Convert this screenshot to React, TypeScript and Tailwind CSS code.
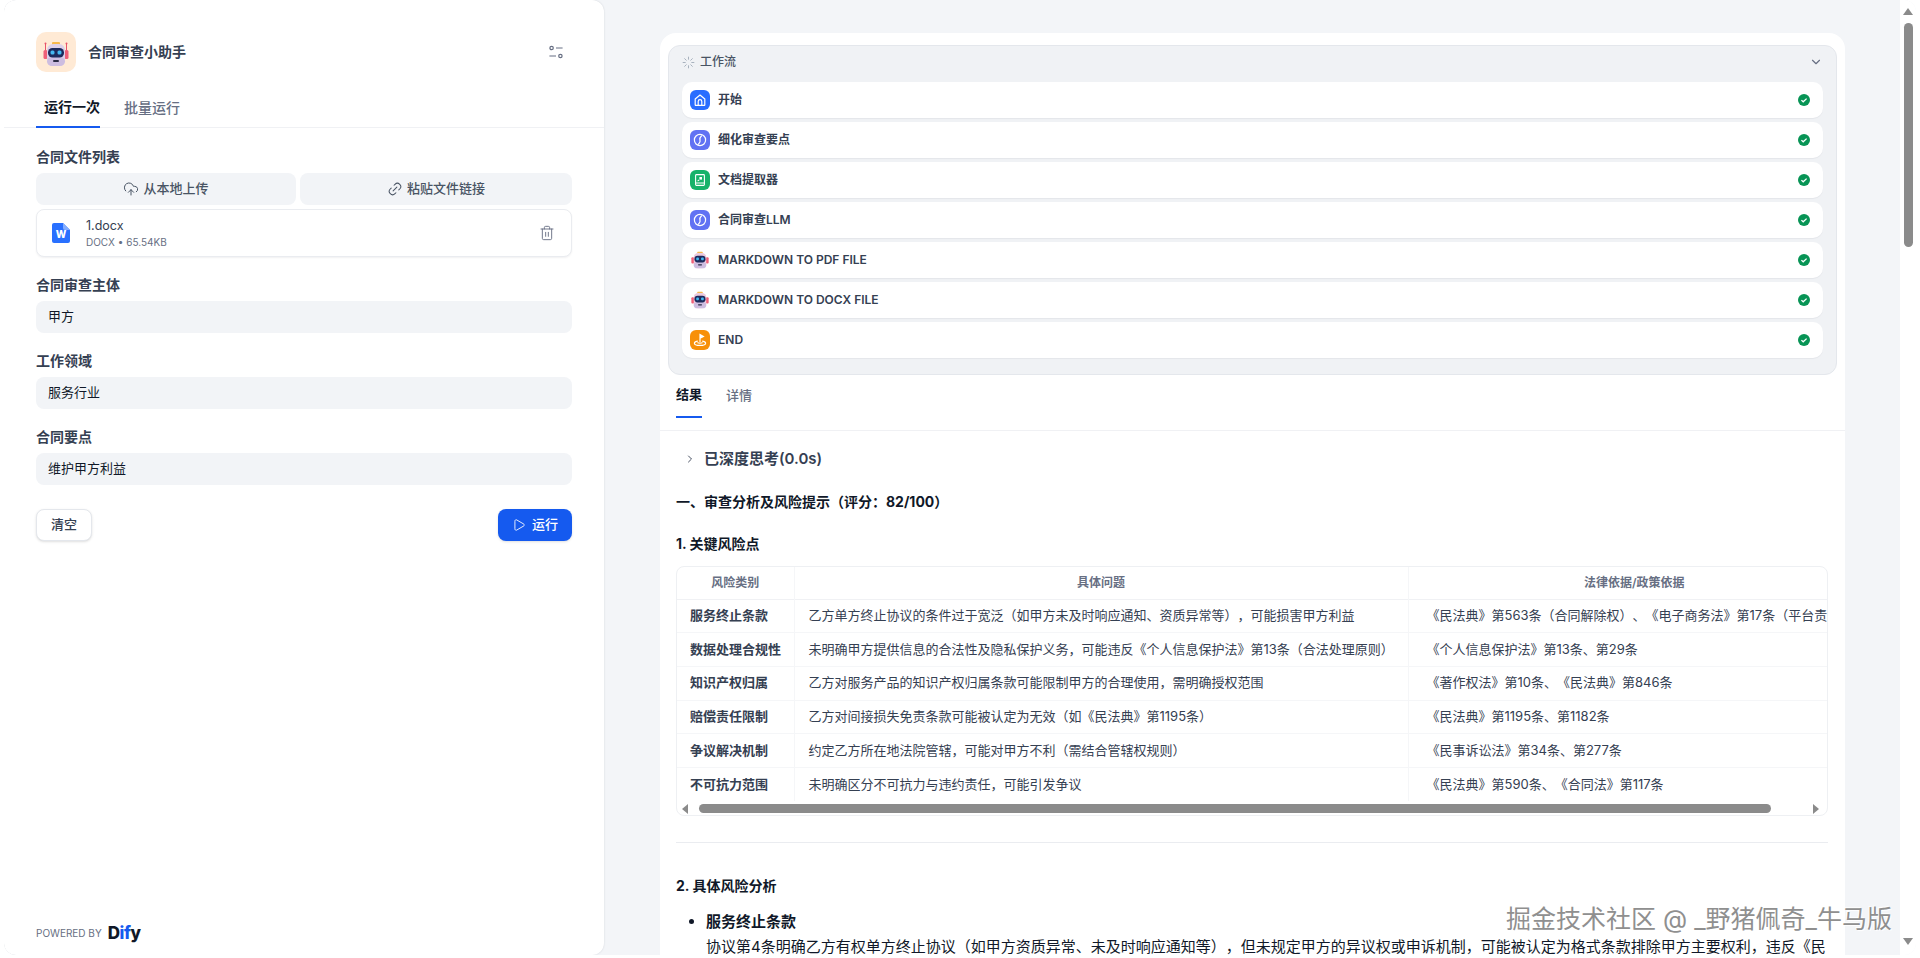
import { ChevronDown, ChevronRight, CloudUpload, Link2, Loader, Play, Trash2 } from "lucide-react";

const font = "font-['Inter','Noto_Sans_CJK_SC',sans-serif]";

const rows = [
  ["服务终止条款", "乙方单方终止协议的条件过于宽泛（如甲方未及时响应通知、资质异常等），可能损害甲方利益", "《民法典》第563条（合同解除权）、《电子商务法》第17条（平台责任）"],
  ["数据处理合规性", "未明确甲方提供信息的合法性及隐私保护义务，可能违反《个人信息保护法》第13条（合法处理原则）", "《个人信息保护法》第13条、第29条"],
  ["知识产权归属", "乙方对服务产品的知识产权归属条款可能限制甲方的合理使用，需明确授权范围", "《著作权法》第10条、《民法典》第846条"],
  ["赔偿责任限制", "乙方对间接损失免责条款可能被认定为无效（如《民法典》第1195条）", "《民法典》第1195条、第1182条"],
  ["争议解决机制", "约定乙方所在地法院管辖，可能对甲方不利（需结合管辖权规则）", "《民事诉讼法》第34条、第277条"],
  ["不可抗力范围", "未明确区分不可抗力与违约责任，可能引发争议", "《民法典》第590条、《合同法》第117条"],
];

function Robot({ className, small }: { className: string; small?: boolean }) {
  return (
    <svg className={className} viewBox={small ? "7 9 26 26" : "0 0 40 40"} fill="none">
      {!small && (
        <>
          <path d="M9.5 12v7M30.5 12v7" stroke="#e8536b" strokeWidth="1" />
          <circle cx="9.5" cy="11.5" r="1" fill="#e8536b" />
          <circle cx="30.5" cy="11.5" r="1" fill="#e8536b" />
        </>
      )}
      <rect x="7.5" y="18" width="4" height="9" rx="1.5" fill="#ef5f78" />
      <rect x="28.5" y="18" width="4" height="9" rx="1.5" fill="#ef5f78" />
      <rect x="16" y="10" width="8" height="3" rx="1" fill="#f7b84b" />
      <rect x="11" y="12" width="18" height="22" rx="6" fill={small ? "#ecc9dc" : "#ddd0ea"} />
      <rect x="11" y="25" width="18" height="9" rx="5" fill="#cdbde0" />
      <rect x="12" y="16" width="16" height="9.5" rx="4.5" fill="#1d2a5c" />
      <rect x="14.5" y="18.5" width="4" height="4" rx="1.5" fill="#45b8f0" />
      <rect x="21.5" y="18.5" width="4" height="4" rx="1.5" fill="#45b8f0" />
      <rect x="17" y="28" width="6" height="2" rx="1" fill="#2b2b45" />
    </svg>
  );
}

function NodeIcon({ kind }: { kind: string }) {
  if (kind === "robot") {
    return (
      <div className="flex h-5 w-5 items-center justify-center">
        <Robot className="h-[18px] w-[18px]" small />
      </div>
    );
  }
  const bg =
    kind === "home" ? "bg-[#296dff]" : kind === "llm" ? "bg-[#6172f3]" : kind === "doc" ? "bg-[#17b26a]" : "bg-[#f79009]";
  return (
    <div className={`flex h-5 w-5 items-center justify-center rounded-md ${bg}`}>
      {kind === "home" && (
        <svg className="h-3.5 w-3.5" viewBox="0 0 14 14" fill="none" stroke="white" strokeWidth="1.2" strokeLinejoin="round">
          <path d="M2.2 6 7 2l4.8 4v5.8a.6.6 0 0 1-.6.6H2.8a.6.6 0 0 1-.6-.6V6Z" />
          <path d="M5.2 12.2V8.4a1.8 1.8 0 0 1 3.6 0v3.8" />
        </svg>
      )}
      {kind === "llm" && (
        <svg className="h-3.5 w-3.5" viewBox="0 0 14 14" fill="none">
          <circle cx="7" cy="7" r="5.6" stroke="white" strokeWidth="1.2" />
          <path d="M8.4 3C6.8 4.4 6.6 5.6 7 7s.2 2.6-1.4 4" stroke="white" strokeWidth="1.3" strokeLinecap="round" />
        </svg>
      )}
      {kind === "doc" && (
        <svg className="h-3.5 w-3.5" viewBox="0 0 14 14" fill="none" stroke="white" strokeWidth="1.1">
          <rect x="2.6" y="1.6" width="8.8" height="10.8" rx="0.8" />
          <path d="M2.6 10h8.8" />
          <rect x="6.4" y="4" width="2.6" height="2.6" fill="white" stroke="none" />
          <path d="M4.6 8.2 6.2 6.8" />
        </svg>
      )}
      {kind === "end" && (
        <svg className="h-3.5 w-3.5" viewBox="0 0 14 14" fill="none" stroke="white" strokeWidth="1.2" strokeLinecap="round">
          <path d="M7 8.4V1.6l3.4 1.8L7 5.2" fill="white" />
          <path d="M4.4 8.2c-1.8.4-3 1.1-3 2 0 1.2 2.5 2.2 5.6 2.2s5.6-1 5.6-2.2c0-.9-1.2-1.6-3-2" />
          <path d="M4.8 9.8c.6.3 1.3.4 2.2.4s1.6-.1 2.2-.4" />
        </svg>
      )}
    </div>
  );
}

function Field({ label, value }: { label: string; value: string }) {
  return (
    <div className="mt-3">
      <div className="flex h-8 items-center text-sm font-semibold text-[#354052]">{label}</div>
      <div className="flex h-8 items-center rounded-lg bg-[#f2f4f7] px-3 text-[13px] text-[#101828]">{value}</div>
    </div>
  );
}

function LeftPanel() {
  return (
    <div className="flex h-full w-[600px] shrink-0 flex-col rounded-xl bg-white shadow-[0_0_2px_rgba(16,24,40,0.15)]">
      <div className="flex items-center px-8 pt-8">
        <div className="flex h-10 w-10 items-center justify-center rounded-[10px] bg-[#ffead5]">
          <Robot className="h-10 w-10" />
        </div>
        <div className="ml-3 flex-1 text-sm font-semibold text-[#354052]">合同审查小助手</div>
        <svg className="mr-2 h-4 w-4" viewBox="0 0 16 16" fill="none" stroke="#676f83" strokeWidth="1.2">
          <circle cx="3.6" cy="4" r="1.7" />
          <path d="M8 4h6.6M1.4 12H8" />
          <circle cx="12.4" cy="12" r="1.7" />
        </svg>
      </div>
      <div className="mt-4 flex h-10 border-b border-[#f0f1f4] px-8 text-sm font-medium">
        <div className="flex h-10 w-16 items-center justify-end border-b-2 border-[#155aef] font-semibold text-[#101828]">运行一次</div>
        <div className="ml-6 flex h-10 items-center text-[#676f83]">批量运行</div>
      </div>
      <div className="px-8 pt-[13px]">
        <div className="flex h-8 items-center text-sm font-semibold text-[#354052]">合同文件列表</div>
        <div className="flex gap-1 text-[13px] font-medium text-[#495464]">
          <div className="flex h-8 w-[260px] items-center justify-center gap-1 rounded-lg bg-[#f2f4f7]">
            <CloudUpload size={16} strokeWidth={1.5} />
            从本地上传
          </div>
          <div className="flex h-8 flex-1 items-center justify-center gap-1 rounded-lg bg-[#f2f4f7]">
            <Link2 size={16} strokeWidth={1.5} className="-rotate-45" />
            粘贴文件链接
          </div>
        </div>
        <div className="mt-1 flex h-12 items-center rounded-lg border border-[#eaecf0] bg-white pl-[15px] pr-4 shadow-[0_1px_2px_rgba(16,24,40,0.06)]">
          <svg className="h-5 w-[18px]" viewBox="0 0 18 20">
            <path d="M2 0h9l7 7v11a2 2 0 0 1-2 2H2a2 2 0 0 1-2-2V2a2 2 0 0 1 2-2Z" fill="#2970ff" />
            <path d="M11 0l7 7h-5a2 2 0 0 1-2-2V0Z" fill="#84adff" />
            <text x="9" y="15" fontSize="10" fontWeight="800" fill="white" textAnchor="middle">W</text>
          </svg>
          <div className="ml-4 flex-1">
            <div className="mt-px text-[12.5px] leading-4 text-[#354052]">1.docx</div>
            <div className="mt-px text-[10px] leading-[14px] text-[#676f83]">DOCX • 65.54KB</div>
          </div>
          <Trash2 size={16} strokeWidth={1.4} className="text-[#676f83]" />
        </div>
        <Field label="合同审查主体" value="甲方" />
        <Field label="工作领域" value="服务行业" />
        <Field label="合同要点" value="维护甲方利益" />
        <div className="mt-6 flex justify-between text-[13px] font-medium">
          <div className="flex h-8 w-14 items-center justify-center rounded-lg border border-[#e4e7ec] bg-white text-[#354052] shadow-sm">清空</div>
          <div className="flex h-8 w-[74px] items-center justify-center gap-1.5 rounded-lg bg-[#155aef] text-white shadow-sm">
            <Play size={14} strokeWidth={1.5} />
            运行
          </div>
        </div>
      </div>
      <div className="mt-auto flex items-center gap-1.5 px-8 pb-3.5">
        <span className="text-[10px] font-normal uppercase text-[#676f83]">Powered by</span>
        <span className="text-[17px] font-extrabold leading-4 tracking-tight text-[#101828]">
          D<span className="text-[#155aef]">if</span>y
        </span>
      </div>
    </div>
  );
}

const nodes = [
  ["home", "开始"],
  ["llm", "细化审查要点"],
  ["doc", "文档提取器"],
  ["llm", "合同审查LLM"],
  ["robot", "MARKDOWN TO PDF FILE"],
  ["robot", "MARKDOWN TO DOCX FILE"],
  ["end", "END"],
];

function Workflow() {
  return (
    <div className="rounded-xl border border-[#e4e7ec] bg-[#f0f2f5] px-[13px] pb-4">
      <div className="flex h-9 items-center pb-1 text-xs font-medium text-[#495464]">
        <Loader size={13} strokeWidth={1.5} className="text-[#98a2b2]" />
        <span className="ml-[5px] flex-1">工作流</span>
        <ChevronDown size={14} className="text-[#676f83]" />
      </div>
      <div className="flex flex-col gap-1">
        {nodes.map(([kind, name]) => (
          <div key={name} className="flex h-9 items-center rounded-[10px] bg-white pl-2 pr-[13px] shadow-[0_1px_1px_rgba(16,24,40,0.05)]">
            <NodeIcon kind={kind} />
            <span className="ml-2 flex-1 text-xs font-semibold text-[#354052]">{name}</span>
            <svg className="h-3 w-3" viewBox="0 0 12 12">
              <circle cx="6" cy="6" r="6" fill="#079455" />
              <path d="M3.4 6.1 5.2 7.8 8.6 4.6" fill="none" stroke="white" strokeWidth="1.3" />
            </svg>
          </div>
        ))}
      </div>
    </div>
  );
}

function RiskTable() {
  return (
    <div className="mt-3 h-[250px] w-[1152px] overflow-hidden rounded-lg border border-[#eef0f3]">
      <table className="w-[1183px] table-fixed border-collapse text-[13px] text-[#354052]">
        <colgroup>
          <col className="w-[117px]" />
          <col className="w-[614px]" />
          <col className="w-[452px]" />
        </colgroup>
        <thead>
          <tr className="h-8 border-b border-[#f0f1f4] text-xs font-semibold text-[#676f83]">
            <th className="border-r border-[#f5f6f8] font-semibold">风险类别</th>
            <th className="border-r border-[#f5f6f8] font-semibold">具体问题</th>
            <th className="font-semibold">法律依据/政策依据</th>
          </tr>
        </thead>
        <tbody>
          {rows.map((r) => (
            <tr key={r[0]} className="h-[33.7px] border-b border-[#f5f6f8] last:border-b-0">
              <td className="overflow-hidden whitespace-nowrap border-r border-[#f5f6f8] pl-[13px] font-semibold">{r[0]}</td>
              <td className="overflow-hidden whitespace-nowrap border-r border-[#f5f6f8] pl-3.5">{r[1]}</td>
              <td className="overflow-hidden whitespace-nowrap pl-[18px]">{r[2]}</td>
            </tr>
          ))}
        </tbody>
      </table>
      <div className="flex h-[15px] items-center pl-[5px] pr-2">
        <div className="h-0 w-0 border-y-[5px] border-r-[6px] border-y-transparent border-r-[#8b8b8b]" />
        <div className="ml-[11px] h-[9px] w-[1072px] rounded-full bg-[#8b8b8b]" />
        <div className="ml-auto h-0 w-0 border-y-[5px] border-l-[6px] border-y-transparent border-l-[#8b8b8b]" />
      </div>
    </div>
  );
}

function ResultCard() {
  return (
    <div className="h-full overflow-hidden rounded-t-2xl bg-white px-2 pt-3">
      <Workflow />
      <div className="-mx-2 border-b border-[#f0f1f4] pb-3 pl-4">
        <div className="flex text-[13px] font-medium">
          <div className="flex h-[43px] items-center border-b-2 border-[#155aef] pb-0.5 font-semibold text-[#101828]">结果</div>
          <div className="ml-6 flex h-[43px] items-center pb-0.5 text-[#676f83]">详情</div>
        </div>
      </div>
      <div className="-mx-2 px-4 pt-4 text-[#354052]">
        <div className="flex h-6 items-center pl-2 text-[15px] font-semibold text-[#354052]">
          <ChevronRight size={12} strokeWidth={1.8} className="mr-2" />
          已深度思考(0.0s)
        </div>
        <div className="mt-[21px] h-5 text-sm font-bold leading-5 text-[#101828]">一、审查分析及风险提示（评分：82/100）</div>
        <div className="mt-[22px] h-5 text-sm font-bold leading-5 text-[#101828]">1. 关键风险点</div>
        <RiskTable />
        <div className="mt-[26px] w-[1152px] border-t border-[#eaecf0]" />
        <div className="mt-[33px] h-5 text-sm font-bold leading-5 text-[#101828]">2. 具体风险分析</div>
        <ul className="mt-[15px] list-disc pl-[30px] text-[15px] text-[#101828]">
          <li>
            <div className="h-5 font-semibold leading-5">服务终止条款</div>
            <div className="mt-[5px] w-[1122px] leading-5">
              协议第4条明确乙方有权单方终止协议（如甲方资质异常、未及时响应通知等），但未规定甲方的异议权或申诉机制，可能被认定为格式条款排除甲方主要权利，违反《民法典》第496条关于格式条款的规定。
            </div>
          </li>
        </ul>
      </div>
    </div>
  );
}

export default function App() {
  return (
    <div className={`relative h-[958px] w-[1920px] overflow-hidden bg-white pb-[3px] pl-1 pr-1 [text-spacing-trim:space-all] ${font}`}>
      <div className="flex h-full overflow-hidden rounded-xl bg-[#f3f5f8]">
        <LeftPanel />
        <div className="min-w-0 flex-1 pl-14 pr-[55px] pt-[33px]">
          <ResultCard />
        </div>
        <div className="flex w-4 shrink-0 flex-col items-center bg-white pb-[10px] pt-2">
          <div className="h-0 w-0 border-x-[5px] border-b-[7px] border-x-transparent border-b-[#8b8b8b]" />
          <div className="mt-2 h-[224px] w-[9px] rounded-full bg-[#8b8b8b]" />
          <div className="mt-auto h-0 w-0 border-x-[5px] border-t-[7px] border-x-transparent border-t-[#8b8b8b]" />
        </div>
      </div>
      <div className="absolute left-[1506px] top-[904px] whitespace-nowrap text-[25px] leading-[30px] text-[#8f8f8f] [text-shadow:1px_1px_1px_#fff,-1px_-1px_1px_#fff]">
        掘金技术社区 @ _野猪佩奇_牛马版
      </div>
    </div>
  );
}
